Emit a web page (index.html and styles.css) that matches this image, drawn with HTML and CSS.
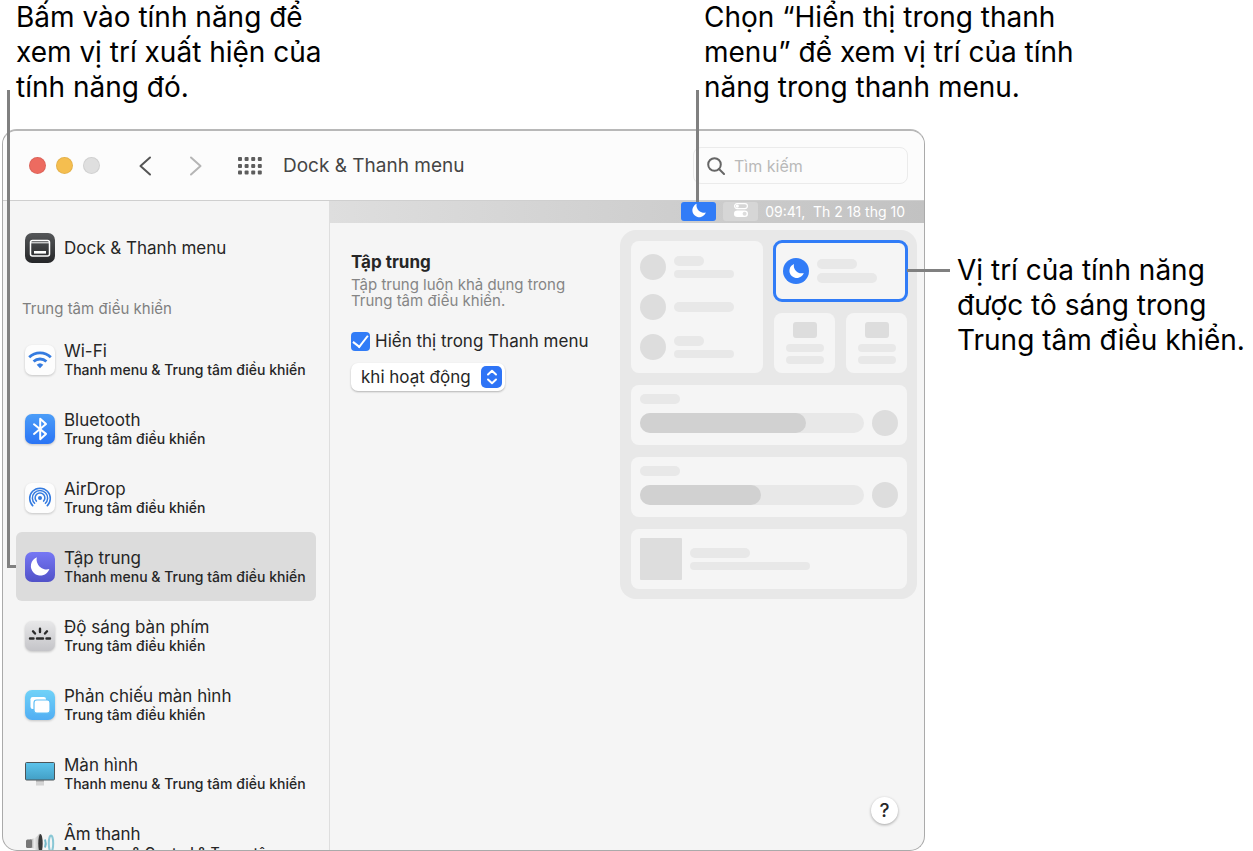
FILE: index.html
```html
<!DOCTYPE html>
<html lang="vi">
<head>
<meta charset="utf-8">
<meta name="viewport" content="width=device-width, initial-scale=1">
<title>Dock &amp; Thanh menu</title>
<link rel="stylesheet" href="styles.css">
</head>
<body>
<main class="figure">
  <div class="callouts">
    <p class="callout">Bấm vào tính năng để<br>xem vị trí xuất hiện của<br>tính năng đó.</p>
    <p class="callout callout-menu">Chọn “Hiển thị trong thanh<br>menu” để xem vị trí của tính<br>năng trong thanh menu.</p>
  </div>

  <section class="window">
    <header class="toolbar">
      <div class="lights"><span class="light red"></span><span class="light yellow"></span><span class="light grey"></span></div>
      <button class="tool back" aria-label="Quay lại"><svg width="14" height="20" viewBox="0 0 14 20"><path d="M12 1.500 2.500 10 12 18.500"/></svg></button>
      <button class="tool forward" aria-label="Tiếp"><svg width="14" height="20" viewBox="0 0 14 20"><path d="M2 1.500 11.500 10 2 18.500"/></svg></button>
      <button class="tool all" aria-label="Hiển thị tất cả"><svg width="24" height="18" viewBox="0 0 24 18"><g id="col"><rect x="0" width="4" height="4" rx="1"/><rect x="0" y="7" width="4" height="4" rx="1"/><rect x="0" y="13.500" width="4" height="4" rx="1"/></g><use href="#col" x="6.600"/><use href="#col" x="13.200"/><use href="#col" x="19.800"/></svg></button>
      <h1 class="title">Dock &amp; Thanh menu</h1>
      <label class="search"><svg width="18" height="18" viewBox="0 0 18 18"><circle cx="7.500" cy="7.500" r="6.300"/><path d="m12 12 5 5"/></svg><input type="search" placeholder="Tìm kiếm" aria-label="Tìm kiếm"></label>
    </header>

    <div class="body">
      <nav class="sidebar">
        <a class="item" href="#dock">
          <svg class="icon" viewBox="0 0 30 30"><defs><linearGradient id="dark" x2="0" y2="1"><stop stop-color="#555759"/><stop offset="1" stop-color="#252628"/></linearGradient></defs><rect width="30" height="30" rx="7" fill="url(#dark)"/><rect x="5.500" y="7.500" width="19" height="15.500" rx="2" fill="none" stroke="#fff" stroke-width="1.500"/><path d="M6 9.800h18" stroke="#fff"/><rect x="9" y="18" width="12" height="2.600" fill="#fff"/></svg>
          <span class="text"><span class="name">Dock &amp; Thanh menu</span></span>
        </a>
        <h2 class="group">Trung tâm điều khiển</h2>
        <a class="item" href="#wifi">
          <svg class="icon raised" viewBox="0 0 30 30"><rect width="30" height="30" rx="7" fill="#fdfdfd"/><g fill="none" stroke="#347be0" stroke-width="2.800"><path d="M4.200 12.200a15.500 15.500 0 0 1 21.600 0"/><path d="M8.600 16.600a9.200 9.200 0 0 1 12.800 0"/></g><path d="M11.700 19.700a4.800 4.800 0 0 1 6.600 0L15 23.200z" fill="#347be0"/></svg>
          <span class="text"><span class="name">Wi-Fi</span><span class="where">Thanh menu &amp; Trung tâm điều khiển</span></span>
        </a>
        <a class="item" href="#bluetooth">
          <svg class="icon raised" viewBox="0 0 30 30"><defs><linearGradient id="blue" x2="0" y2="1"><stop stop-color="#4b9df8"/><stop offset="1" stop-color="#2a74f5"/></linearGradient></defs><rect width="30" height="30" rx="7" fill="url(#blue)"/><path d="m9 10.300 12 9.600-5.800 5.300V4.800l5.800 5.300L9 19.900" fill="none" stroke="#fff" stroke-width="2" stroke-linejoin="round" stroke-linecap="round"/></svg>
          <span class="text"><span class="name">Bluetooth</span><span class="where">Trung tâm điều khiển</span></span>
        </a>
        <a class="item" href="#airdrop">
          <svg class="icon raised" viewBox="0 0 30 30"><rect width="30" height="30" rx="7" fill="#fdfdfd"/><g fill="none" stroke="#347be0" stroke-width="1.500"><path d="M8.200 23.200a10.300 10.300 0 1 1 13.600 0"/><path d="M10 20.800a7.600 7.600 0 1 1 10 0"/><path d="M11.800 18.600a4.900 4.900 0 1 1 6.400 0"/></g><circle cx="15" cy="15" r="2" fill="#347be0"/></svg>
          <span class="text"><span class="name">AirDrop</span><span class="where">Trung tâm điều khiển</span></span>
        </a>
        <a class="item selected" href="#focus" aria-current="page">
          <svg class="icon" viewBox="0 0 30 30"><defs><linearGradient id="violet" x2="0" y2="1"><stop stop-color="#7677f4"/><stop offset="1" stop-color="#5152c8"/></linearGradient></defs><rect width="30" height="30" rx="7" fill="url(#violet)"/><path id="moon" d="M11.800 5.200A9.500 9.500 0 1 0 24.400 17 10 10 0 0 1 11.800 5.200z" fill="#fff"/></svg>
          <span class="text"><span class="name">Tập trung</span><span class="where">Thanh menu &amp; Trung tâm điều khiển</span></span>
        </a>
        <a class="item" href="#keyboard">
          <svg class="icon raised" viewBox="0 0 30 30"><defs><linearGradient id="silver" x2="0" y2="1"><stop stop-color="#e8e8e9"/><stop offset="1" stop-color="#c4c4c8"/></linearGradient></defs><rect width="30" height="30" rx="7" fill="url(#silver)"/><path d="M5 17.500h3.500m3.500 0h6m3.500 0H25M15 11V7.800m-5 4.700L8 10.300m12 2.200 2-2.200" stroke="#2b2b2b" stroke-width="2.400" stroke-linecap="round"/></svg>
          <span class="text"><span class="name">Độ sáng bàn phím</span><span class="where">Trung tâm điều khiển</span></span>
        </a>
        <a class="item" href="#mirroring">
          <svg class="icon raised" viewBox="0 0 30 30"><defs><linearGradient id="sky" x2="0" y2="1"><stop stop-color="#70d2f8"/><stop offset="1" stop-color="#51aef3"/></linearGradient></defs><rect width="30" height="30" rx="7" fill="url(#sky)"/><rect x="5.500" y="7" width="15.500" height="12" rx="2.200" fill="#fff"/><rect x="9" y="10" width="16" height="13" rx="2.800" fill="#fff" stroke="#60bff5" stroke-width="1.200"/></svg>
          <span class="text"><span class="name">Phản chiếu màn hình</span><span class="where">Trung tâm điều khiển</span></span>
        </a>
        <a class="item" href="#display">
          <svg class="icon" viewBox="0 0 30 30"><defs><linearGradient id="screen" x2="0" y2="1"><stop stop-color="#5cc4ec"/><stop offset="1" stop-color="#429fc5"/></linearGradient></defs><path d="M11 21h8v5.500h-8z" fill="#d4d4d4"/><path d="M11 21h8v2h-8z" fill="#bbb"/><rect x=".5" y="3.500" width="29" height="17.500" rx="1" fill="url(#screen)" stroke="#4c5558"/></svg>
          <span class="text"><span class="name">Màn hình</span><span class="where">Thanh menu &amp; Trung tâm điều khiển</span></span>
        </a>
        <a class="item" href="#sound">
          <svg class="icon" viewBox="0 0 30 30"><defs><linearGradient id="cone"><stop stop-color="#8a8a8a"/><stop offset=".35" stop-color="#eee"/><stop offset="1" stop-color="#a5a5a5"/></linearGradient></defs><path d="M5 11.500q6-1 9-5.500 3-1.500 3 9.500t-3 9.500q-4-5-9-5.500z" fill="url(#cone)"/><rect x="1" y="11.500" width="6" height="8.500" rx="1.500" fill="#777"/><ellipse cx="15.500" cy="15.500" rx="2.200" ry="9.500" fill="#383838"/><path d="M20 11.500q1.500 4 0 8" fill="none" stroke="#73b7c8" stroke-width="2"/><ellipse cx="26" cy="15.500" rx="2.200" ry="8" fill="none" stroke="#8ac7d5" stroke-width="2"/></svg>
          <span class="text"><span class="name">Âm thanh</span><span class="where">Menu Bar &amp; Control &amp; Trung tâm</span></span>
        </a>
      </nav>

      <div class="main">
        <div class="menubar">
          <span class="status active"><svg width="16" height="16" viewBox="4 4 22 22"><use href="#moon"/></svg><i class="pointer pointer-menu"></i></span>
          <span class="status"><svg width="14" height="14" viewBox="0 0 14 14"><rect x=".6" y=".6" width="12.800" height="5" rx="2.500" fill="none" stroke="#fff" stroke-width="1.200"/><circle cx="3.300" cy="3.100" r="1.600" fill="#fff"/><rect y="7.500" width="14" height="6.500" rx="3.200" fill="#fff"/><circle cx="10.600" cy="10.700" r="2" fill="#ddd"/></svg></span>
          <time class="clock">09:41,&nbsp; Th 2 18 thg 10</time>
        </div>
        <div class="pane">
          <form class="options">
            <h2 class="heading">Tập trung</h2>
            <p class="hint">Tập trung luôn khả dụng trong<br>Trung tâm điều khiển.</p>
            <div class="check"><input type="checkbox" id="show" checked><label for="show">Hiển thị trong Thanh menu</label></div>
            <div class="popup"><select aria-label="Khi nào hiển thị"><option>khi hoạt động</option></select><span class="arrows"><svg width="12" height="16" viewBox="0 0 12 16"><path d="M2 5.500 6 1.800l4 3.700M2 10.500l4 3.700 4-3.700"/></svg></span></div>
          </form>

          <div class="center">
            <div class="card toggles">
              <div class="toggle"><i class="dot"></i><span class="bars"><i class="bar short"></i><i class="bar thin"></i></span></div>
              <div class="toggle"><i class="dot"></i><span class="bars"><i class="bar"></i></span></div>
              <div class="toggle"><i class="dot"></i><span class="bars"><i class="bar short"></i><i class="bar thin"></i></span></div>
            </div>
            <div class="card focus"><span class="dot on"><svg width="17" height="17" viewBox="4 4 22 22"><use href="#moon"/></svg></span><span class="bars"><i class="bar"></i><i class="bar wide"></i></span><i class="pointer pointer-center"></i></div>
            <div class="card tile"><i class="glyph"></i><i class="bar thin"></i><i class="bar thin"></i></div>
            <div class="card tile"><i class="glyph"></i><i class="bar thin"></i><i class="bar thin"></i></div>
            <div class="card slider"><div class="gauge"><i class="bar"></i><div class="track"><i class="fill" style="width:74%"></i></div></div><i class="dot"></i></div>
            <div class="card slider"><div class="gauge"><i class="bar"></i><div class="track"><i class="fill" style="width:54%"></i></div></div><i class="dot"></i></div>
            <div class="card media"><i class="cover"></i><span class="bars"><i class="bar"></i><i class="bar thin"></i></span></div>
          </div>
          <button class="help" aria-label="Trợ giúp">?</button>
        </div>
      </div>
    </div>
    <i class="pointer pointer-list"></i>
  </section>

  <p class="callout callout-side">Vị trí của tính năng<br>được tô sáng trong<br>Trung tâm điều khiển.</p>
</main>
</body>
</html>
```

FILE: styles.css
```css
* { box-sizing: border-box; }

body {
  margin: 0;
  background: #fff;
  color: #262626;
  font-family: Inter, "Noto Sans", sans-serif;
}

h1, h2, p { margin: 0; font-weight: 400; }
button, input, select { font: inherit; color: inherit; }
i { display: block; }

.figure {
  display: grid;
  grid-template-columns: minmax(0, 1fr) 296px;
  grid-template-rows: 129px minmax(0, 1fr);
  column-gap: 32px;
  height: 100vh;
  padding-left: 2px;
}

/* Callouts and their leader lines */
.callouts { display: flex; justify-content: space-between; grid-column: 1 / -1; padding-left: 14px; }
.callout { color: #000; font-size: 28px; line-height: 35px; white-space: nowrap; }
.callout-menu { width: 549px; }
.callout-side { padding-top: 124px; }
.pointer { position: absolute; background: #808080; }
.pointer-menu { right: 17px; bottom: 100%; width: 3px; height: 112px; }
.pointer-center { left: 100%; top: 28px; width: 43px; height: 3px; }
.pointer-list { left: 4px; top: -41px; width: 9px; height: 478px; background: none; border: solid #808080; border-width: 0 0 3px 3px; }

/* Window */
.window {
  position: relative;
  display: flex;
  flex-direction: column;
  min-height: 0;
  border: 1px solid #aaa;
  border-top: 2px solid #b8b8b8;
  border-radius: 15px;
  background: #f5f5f5;
}
.toolbar {
  display: flex;
  align-items: center;
  height: 70px;
  flex: none;
  padding: 0 16px 0 26px;
  border-bottom: 1px solid #cfcfcf;
  border-radius: 14px 14px 0 0;
  background: #fcfcfc;
}
.lights { display: flex; gap: 10px; }
.light { width: 17px; height: 17px; border: 1px solid #0001; border-radius: 50%; }
.red { background: #ed6b60; }
.yellow { background: #f5be4f; }
.grey { background: #dfdfdf; }
.tool { display: flex; padding: 0; border: 0; background: none; }
.tool path { fill: none; stroke: #555; stroke-width: 2; stroke-linecap: round; stroke-linejoin: round; }
.back { margin-left: 38px; }
.forward { margin-left: 37px; }
.forward path { stroke: #b5b5b5; }
.all { margin-left: 35px; fill: #5d5d5d; }
.title { margin-left: 21px; color: #454545; font-size: 19px; line-height: 24px; white-space: nowrap; }
.search {
  display: flex;
  align-items: center;
  gap: 9px;
  width: 215px;
  height: 37px;
  margin-left: auto;
  padding: 0 13px;
  border: 1px solid #ebebeb;
  border-radius: 8px;
}
.search svg { flex: none; fill: none; stroke: #666; stroke-width: 2; stroke-linecap: round; }
.search input { width: 100%; min-width: 0; padding: 0; border: 0; outline: 0; background: none; font-size: 16px; }
.search input::placeholder { color: #b9b9b9; }

.body { display: flex; flex: 1; min-height: 0; }

/* Sidebar */
.sidebar {
  display: flex;
  flex-direction: column;
  flex: none;
  width: 327px;
  padding: 12px 13px 0;
  overflow: hidden;
  border-right: 1px solid #dedede;
  border-bottom-left-radius: 14px;
}
.item {
  display: flex;
  align-items: center;
  flex: none;
  gap: 9px;
  height: 69px;
  padding-left: 9px;
  border-radius: 6px;
  color: inherit;
  text-decoration: none;
  white-space: nowrap;
}
.selected { background: #dcdcdc; }
.icon { width: 30px; height: 30px; overflow: visible; }
.raised { filter: drop-shadow(0 1px 1px #0003); }
.text { display: flex; flex-direction: column; }
.name { font-size: 17px; line-height: 20px; }
.where { font-size: 14px; font-weight: 500; line-height: 18px; }
.group { flex: none; height: 43px; padding: 18px 0 0 6px; color: #7f7f7f; font-size: 15px; line-height: 18px; }

/* Menu bar */
.main { display: flex; flex: 1; flex-direction: column; min-width: 0; }
.menubar {
  display: flex;
  justify-content: flex-end;
  align-items: flex-start;
  gap: 7px;
  height: 22px;
  padding: 1px 19px 0 0;
  background: linear-gradient(90deg, #dedede, #c2c2c2);
}
.status { position: relative; display: flex; flex: none; justify-content: center; width: 35px; height: 19px; padding-top: 1px; border-radius: 3px; background: #d6d6d6; }
.active { background: #317cf7; }
.clock { color: #fff; font-size: 14px; line-height: 19px; white-space: nowrap; }

/* Settings */
.pane { position: relative; display: flex; flex: 1; align-items: flex-start; justify-content: space-between; padding: 7px 7px 0 21px; }
.options { padding-top: 20px; white-space: nowrap; }
.heading { font-size: 17px; font-weight: 700; line-height: 24px; }
.hint { padding-top: 3px; color: #858585; font-size: 15px; line-height: 16px; }
.check { display: flex; align-items: center; gap: 5px; margin-top: 20px; font-size: 17px; line-height: 24px; }
.check input {
  width: 19px;
  height: 19px;
  margin: 0;
  appearance: none;
  border-radius: 4px;
  background: #317cf7;
  display: grid;
  place-items: center;
}
.check input:checked::before { content: ""; width: 7px; height: 13px; margin-bottom: 4px; border: solid #fff; border-width: 0 2px 2px 0; transform: rotate(38deg); }
.popup { position: relative; width: 154px; margin-top: 10px; }
.popup select { width: 100%; height: 28px; padding: 0 10px; appearance: none; border: 0; border-radius: 7px; background: #fff; box-shadow: 0 1px 2px #0004; font-size: 17px; }
.arrows { position: absolute; top: 3px; right: 3px; display: grid; place-items: center; width: 21px; height: 22px; border-radius: 5px; background: #2e74f6; pointer-events: none; }
.arrows path { fill: none; stroke: #fff; stroke-width: 2; stroke-linecap: round; stroke-linejoin: round; }

/* Control Center preview */
.center {
  display: grid;
  flex: none;
  grid-template-columns: 132px 61px 61px;
  grid-auto-rows: 60px;
  gap: 12px 11px;
  padding: 11px 10px 10px 11px;
  border-radius: 16px;
  background: #e8e8e8;
}
.card { display: flex; border-radius: 8px; background: #f5f5f5; }
.dot { flex: none; width: 26px; height: 26px; border-radius: 50%; background: #ddd; }
.bar { width: 60px; height: 10px; border-radius: 5px; background: #e8e8e8; }
.bars { display: flex; flex-direction: column; }
.toggles { grid-row: span 2; flex-direction: column; gap: 14px; padding: 13px 9px; }
.toggle { display: flex; align-items: center; gap: 8px; }
.toggle .bars { gap: 4px; }
.short { width: 30px; }
.thin { height: 8px; }
.focus { position: relative; grid-column: span 2; align-items: center; gap: 8px; padding-left: 9px; outline: 3px solid #317cf7; outline-offset: -2px; }
.focus .bars { gap: 4px; }
.focus .bar { width: 40px; }
.focus .wide { width: 60px; }
.on { display: grid; place-items: center; background: #317cf7; }
.tile { flex-direction: column; align-items: center; gap: 4px; padding-top: 9px; }
.tile .bar { width: 38px; }
.glyph { width: 24px; height: 16px; margin-bottom: 2px; border-radius: 3px; background: #ddd; }
.slider { grid-column: 1 / -1; align-items: flex-end; gap: 8px; padding: 9px; }
.gauge { flex: 1; }
.gauge .bar { width: 40px; margin-bottom: 9px; }
.track { height: 20px; margin-bottom: 3px; border-radius: 10px; background: #e8e8e8; }
.fill { height: 20px; border-radius: 10px; background: #d1d1d1; }
.media { grid-column: 1 / -1; align-items: center; gap: 8px; padding-left: 9px; }
.media .bars { gap: 4px; }
.media .bar { width: 60px; }
.media .thin { width: 120px; }
.cover { width: 42px; height: 42px; border-radius: 1px; background: #ddd; }

.help { position: absolute; right: 26px; bottom: 26px; width: 27px; height: 27px; padding: 0; border: 0; border-radius: 50%; background: #fff; box-shadow: 0 1px 3px #0005; font-size: 19px; font-weight: 500; line-height: 27px; }
```
